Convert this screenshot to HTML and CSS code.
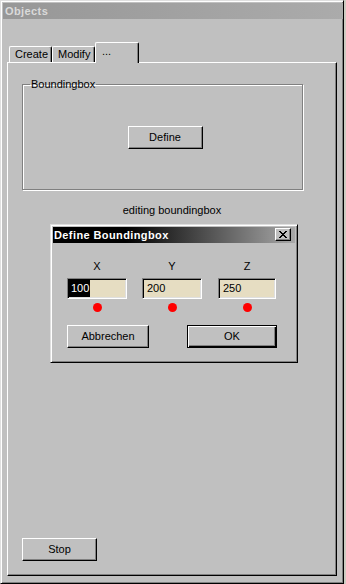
FILE: index.html
```html
<!DOCTYPE html>
<html>
<head>
<meta charset="utf-8">
<title>Objects</title>
<link rel="stylesheet" href="styles.css">
</head>
<body>
<div class="window">
  <div class="titlebar"><span class="title-text">Objects</span></div>
  <div class="tabs">
    <div class="tab">Create</div>
    <div class="tab">Modify</div>
    <div class="tab tab-active">...</div>
  </div>
  <div class="panel">
    <fieldset class="group">
      <legend class="group-label">Boundingbox</legend>
      <button class="btn btn-define">Define</button>
    </fieldset>
    <div class="status">editing boundingbox</div>
    <div class="dialog">
      <div class="dlg-title">
        <span class="dlg-title-text">Define Boundingbox</span>
        <span class="close-btn">
          <svg width="8" height="7" viewBox="0 0 8 7" shape-rendering="crispEdges"><path d="M0 0h2v1h-2z M6 0h2v1h-2z M1 1h2v1h-2z M5 1h2v1h-2z M2 2h4v1h-4z M3 3h2v1h-2z M2 4h4v1h-4z M1 5h2v1h-2z M5 5h2v1h-2z M0 6h2v1h-2z M6 6h2v1h-2z" fill="#000"/></svg>
        </span>
      </div>
      <div class="dlg-body">
        <div class="coords">
          <div class="coord">
            <div class="coord-label">X</div>
            <div class="field"><span class="sel">100</span></div>
            <div class="dot"></div>
          </div>
          <div class="coord">
            <div class="coord-label">Y</div>
            <div class="field"><span class="val">200</span></div>
            <div class="dot"></div>
          </div>
          <div class="coord coord-z">
            <div class="coord-label">Z</div>
            <div class="field field-z"><span class="val">250</span></div>
            <div class="dot"></div>
          </div>
        </div>
        <div class="dlg-buttons">
          <button class="btn btn-cancel">Abbrechen</button>
          <button class="btn btn-ok">OK</button>
        </div>
      </div>
    </div>
    <button class="btn btn-stop">Stop</button>
  </div>
</div>
</body>
</html>
```
FILE: styles.css
```css
* { box-sizing: border-box; }
html { background: #cfcbc2; }
body {
  margin: 0;
  font-family: "Liberation Sans", Arial, sans-serif;
  font-size: 11px;
  line-height: 13px;
  color: #000;
}
.window {
  width: 344px;
  height: 584px;
  background: #c0c0c0;
  border: 1px solid;
  border-color: #dfdfdf #000 #000 #dfdfdf;
  box-shadow: inset 1px 1px #fff, inset -1px -1px #808080;
  padding: 2px 0 2px 2px;
  display: flex;
  flex-direction: column;
}
.titlebar {
  height: 16px;
  background: linear-gradient(90deg, #979797, #ababab);
  padding-left: 2px;
  display: flex;
  align-items: center;
}
.title-text {
  font-weight: bold;
  font-size: 11px;
  letter-spacing: 0.4px;
  color: #dadada;
  line-height: 16px;
}
.tabs {
  margin-top: 23px;
  margin-left: 6px;
  height: 20px;
  display: flex;
  align-items: flex-end;
}
.tab {
  width: 43px;
  height: 16px;
  padding: 1px 0 0 5px;
  border-top: 1px solid #fff;
  border-left: 1px solid #fff;
  border-right: 1px solid #000;
  border-radius: 2px 2px 0 0;
  box-shadow: inset -1px 0 #808080;
  background: #c0c0c0;
  white-space: nowrap;
}
.tab-active {
  width: 44px;
  height: 21px;
  margin-bottom: -1px;
  padding: 2px 0 0 6px;
  position: relative;
  z-index: 1;
}
.panel {
  margin-left: 4px;
  width: 330px;
  height: 514px;
  border: 1px solid;
  border-color: #fff #000 #000 #fff;
  box-shadow: inset -1px -1px #808080;
  padding-top: 15px;
  display: flex;
  flex-direction: column;
  align-items: flex-start;
}
.group {
  margin: 0 0 0 14px;
  width: 281px;
  padding: 35px 0 40px 5px;
  border: 1px solid #808080;
  box-shadow: inset 1px 1px #fff, 1px 1px #fff;
  min-width: 0;
}
.group-label {
  margin-left: 2px;
  padding: 0 1px;
  line-height: 13px;
}
.btn {
  display: block;
  font-family: "Liberation Sans", Arial, sans-serif;
  font-size: 11px;
  line-height: 13px;
  color: #000;
  background: #c0c0c0;
  padding: 0;
  border: 1px solid;
  border-color: #fff #000 #000 #fff;
  box-shadow: inset -1px -1px #808080;
  border-radius: 0;
}
.btn-define {
  width: 75px;
  height: 23px;
  margin: 0 auto;
}
.status {
  align-self: stretch;
  margin-top: 14px;
  text-align: center;
}
.dialog {
  margin-top: 7px;
  margin-left: 42px;
  width: 248px;
  border: 1px solid;
  border-color: #dfdfdf #000 #000 #dfdfdf;
  box-shadow: inset 1px 1px #fff, inset -1px -1px #808080;
  padding: 2px;
  background: #c0c0c0;
}
.dlg-title {
  height: 16px;
  background: linear-gradient(90deg, #000 0%, #000 30%, #a8a8a8 100%);
  display: flex;
  align-items: flex-start;
  justify-content: space-between;
  padding-left: 1px;
}
.dlg-title-text {
  color: #fff;
  font-weight: bold;
  font-size: 11px;
  letter-spacing: 0.4px;
  line-height: 16px;
}
.close-btn {
  margin-top: 1px;
  margin-right: 4px;
  width: 16px;
  height: 13px;
  background: #c0c0c0;
  border: 1px solid;
  border-color: #fff #000 #000 #fff;
  box-shadow: inset -1px -1px #808080;
  display: flex;
  align-items: center;
  justify-content: center;
}
.close-btn svg { display: block; }
.dlg-body {
  padding: 17px 0 12px 14px;
}
.coords {
  display: flex;
  gap: 15px;
}
.coord {
  width: 60px;
  display: flex;
  flex-direction: column;
  align-items: center;
}
.coord-z {
  width: 58px;
  margin-left: 1px;
}
.coord-label {
  height: 13px;
  margin-bottom: 5px;
}
.field {
  align-self: stretch;
  height: 21px;
  background: #e6ddc2;
  border: 1px solid;
  border-color: #808080 #fff #fff #808080;
  box-shadow: inset 1px 1px #000, inset -1px -1px #dfdfdf;
  padding: 1px 0 0 1px;
  display: flex;
  align-items: stretch;
}
.sel {
  background: #000;
  color: #fff;
  padding: 1px 1px 0 2px;
  line-height: 15px;
  height: 17px;
}
.val {
  padding: 1px 0 0 3px;
  line-height: 15px;
}
.dot {
  width: 9px;
  height: 9px;
  margin-top: 4px;
  border-radius: 50%;
  background: #f00;
}
.dlg-buttons {
  display: flex;
  gap: 38px;
  margin-top: 13px;
}
.btn-cancel {
  width: 82px;
  height: 23px;
}
.btn-ok {
  width: 90px;
  height: 23px;
  border: 1px solid #000;
  box-shadow: inset 1px 1px #fff, inset -1px -1px #000, inset -2px -2px #808080;
}
.btn-stop {
  margin-top: auto;
  margin-left: 14px;
  margin-bottom: 14px;
  width: 75px;
  height: 23px;
}
```
